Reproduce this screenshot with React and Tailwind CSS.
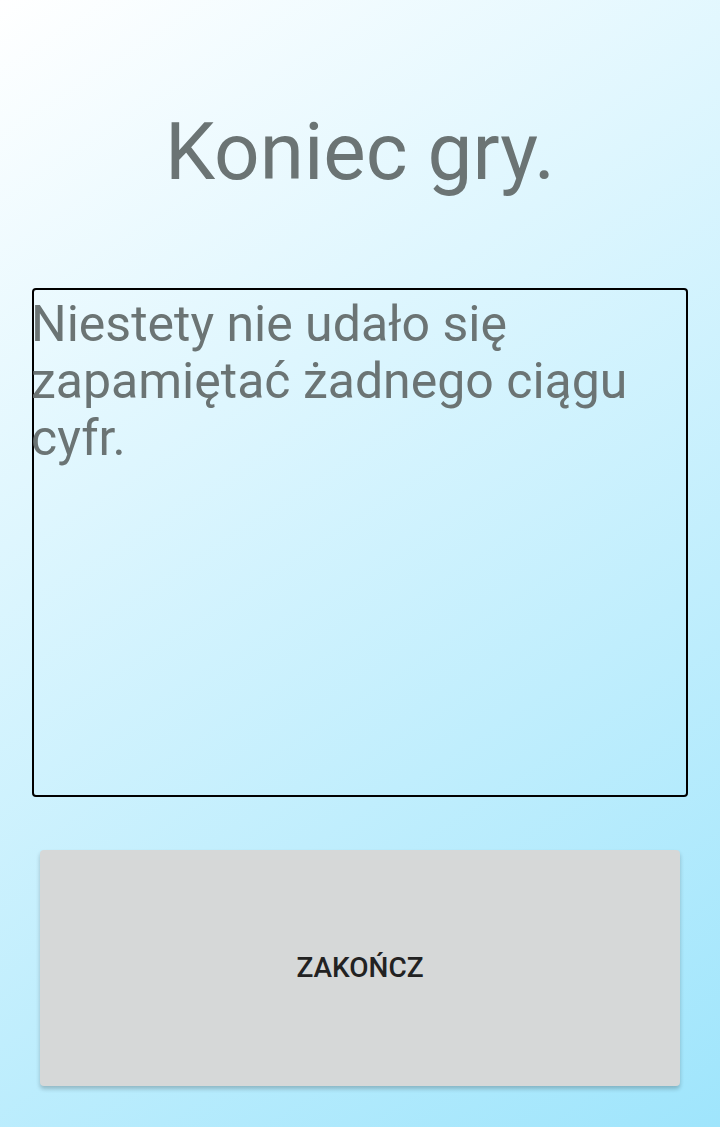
export default function App() {
  return (
    <div
      className="flex h-[1127px] w-full flex-col items-center overflow-hidden bg-[linear-gradient(147deg,#ffffff_0%,#9fe5fc_100%)]"
      style={{ fontFamily: "Roboto, 'Noto Sans', sans-serif" }}
    >
      <h1 className="mt-[105px] text-center text-[80px] font-normal leading-[94px] text-[#6b7474]">
        Koniec gry.
      </h1>

      <div className="mt-[89px] h-[509px] w-[656px] rounded-[4px] border-2 border-black">
        <p className="-ml-[3px] pt-[6px] text-[50px] leading-[57px] text-[#6b7474]">
          Niestety nie udało się zapamiętać żadnego ciągu cyfr.
        </p>
      </div>

      <button className="mt-[53px] flex h-[236px] w-[640px] items-center justify-center rounded-[4px] bg-[#d6d8d8] text-[28px] font-medium uppercase text-[#222222] shadow-[0_3px_4px_rgba(0,0,0,0.22)]">
        Zakończ
      </button>
    </div>
  );
}
